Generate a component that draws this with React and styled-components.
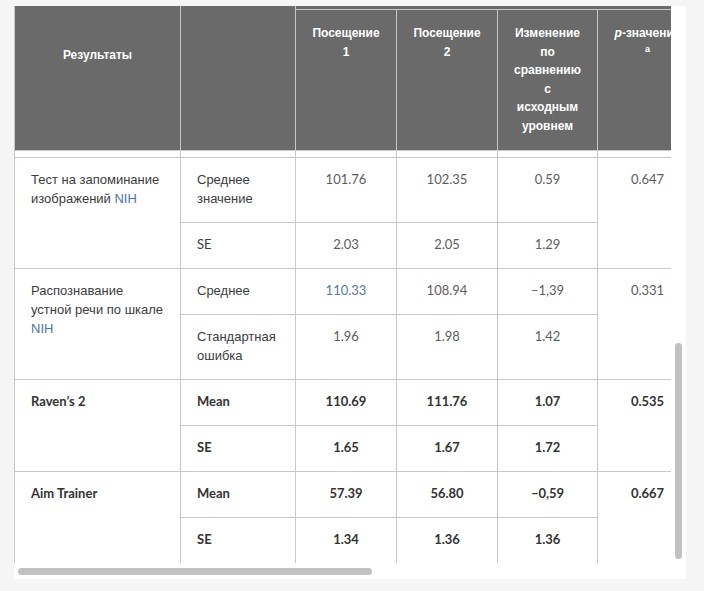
import React from "react";
import styled, { createGlobalStyle } from "styled-components";

const GlobalStyle = createGlobalStyle`
  html, body {
    margin: 0;
    padding: 0;
    background: #f5f5f5;
  }
  body {
    font-family: "Liberation Sans", Arial, sans-serif;
  }
`;

// white scroll frame: viewport + scroll bars drawn beside it
const Frame = styled.div`
  display: grid;
  grid-template-columns: 657px 15px;
  grid-template-rows: 557px 16px;
  width: 672px;
  margin: 6px 18px 12px 14px;
  background: #fff;
`;

const Viewport = styled.div`
  overflow: hidden;
`;

const Track = styled.div`
  display: flex;
  flex-direction: ${(p) => (p.$vertical ? "column" : "row")};
  justify-content: ${(p) => (p.$vertical ? "flex-end" : "flex-start")};
  padding: ${(p) => (p.$vertical ? "4px" : "5px 4px 4px")};
  box-sizing: border-box;
`;

const Thumb = styled.div`
  flex: none;
  width: ${(p) => (p.$vertical ? "7px" : `${p.$size}px`)};
  height: ${(p) => (p.$vertical ? `${p.$size}px` : "7px")};
  border-radius: 4px;
  background: #c1c1c1;
`;

const Table = styled.table`
  border-collapse: separate;
  border-spacing: 0;
  table-layout: fixed;
  width: 684px;
  border-left: 1px solid #c8c8c8;
`;

const HeadCell = styled.th`
  box-sizing: border-box;
  background: #6a6a6a;
  color: #fff;
  font: bold 12px/18.6px "Liberation Sans", Arial, sans-serif;
  text-align: center;
  vertical-align: top;
  padding: ${(p) => (p.$strip ? "0" : p.$lead ? "40px 15px 14px" : "14px 15px")};
  height: ${(p) => (p.$strip ? "4px" : "auto")};
  border-right: 1px solid #c8c8c8;
  border-bottom: 1px solid #c8c8c8;
`;

const Italic = styled.i`
  font-style: italic;
`;

const Sup = styled.sup`
  font-size: 9px;
  line-height: 1;
  vertical-align: 4px;
`;

const Cell = styled.td`
  box-sizing: border-box;
  padding: ${(p) => (p.$gap ? "0" : "12px 16px 14px")};
  height: ${(p) => (p.$gap ? "7px" : "auto")};
  vertical-align: top;
  text-align: ${(p) => (p.$center ? "center" : "left")};
  font-family: ${(p) =>
    p.$latin ? 'Lato, "Liberation Sans", sans-serif' : '"Liberation Sans", Arial, sans-serif'};
  font-size: 13px;
  line-height: 19px;
  font-weight: ${(p) => (p.$bold ? 700 : 400)};
  color: ${(p) => p.$tone || (p.$bold ? "#333" : p.$center ? "#5c5c5c" : "#3c3c3c")};
  border-right: 1px solid #c8c8c8;
  border-bottom: 1px solid #c8c8c8;
`;

const Abbr = styled.span`
  color: #4f73a6;
`;

const hasCyr = (s) => /[А-Яа-яЁё]/.test(s);

const groups = [
  {
    name: "Тест на запоминание изображений",
    nih: true,
    p: "0.647",
    rows: [
      ["Среднее значение", "101.76", "102.35", "0.59"],
      ["SE", "2.03", "2.05", "1.29"],
    ],
  },
  {
    name: "Распознавание устной речи по шкале",
    nih: true,
    p: "0.331",
    tones: { 1: "#5876a3" },
    rows: [
      ["Среднее", "110.33", "108.94", "–1,39"],
      ["Стандартная ошибка", "1.96", "1.98", "1.42"],
    ],
  },
  {
    name: "Raven’s 2",
    bold: true,
    p: "0.535",
    rows: [
      ["Mean", "110.69", "111.76", "1.07"],
      ["SE", "1.65", "1.67", "1.72"],
    ],
  },
  {
    name: "Aim Trainer",
    bold: true,
    p: "0.667",
    rows: [
      ["Mean", "57.39", "56.80", "–0,59"],
      ["SE", "1.34", "1.36", "1.36"],
    ],
  },
];

const widths = [166, 115, 101, 101, 100, 100];

function StatRow({ group, row, first }) {
  const bold = group.bold;
  const tone = (i) => (first && group.tones && group.tones[i]) || undefined;
  return (
    <tr>
      {first && (
        <Cell rowSpan={2} $bold={bold} $latin={!hasCyr(group.name)}>
          {group.name}
          {group.nih && (
            <>
              {" "}
              <Abbr>NIH</Abbr>
            </>
          )}
        </Cell>
      )}
      <Cell $bold={bold} $latin={!hasCyr(row[0])}>
        {row[0]}
      </Cell>
      {row.slice(1).map((v, i) => (
        <Cell key={i} $center $latin $bold={bold} $tone={tone(i + 1)}>
          {v}
        </Cell>
      ))}
      {first && (
        <Cell rowSpan={2} $center $latin $bold={bold}>
          {group.p}
        </Cell>
      )}
    </tr>
  );
}

export default function App() {
  return (
    <>
      <GlobalStyle />
      <Frame>
        <Viewport>
          <Table>
            <colgroup>
              {widths.map((w, i) => (
                <col key={i} style={{ width: w }} />
              ))}
            </colgroup>
            <thead>
              <tr>
                <HeadCell rowSpan={2} $lead>
                  Результаты
                </HeadCell>
                <HeadCell rowSpan={2} />
                <HeadCell colSpan={4} $strip />
              </tr>
              <tr>
                <HeadCell>Посещение 1</HeadCell>
                <HeadCell>Посещение 2</HeadCell>
                <HeadCell>Изменение по сравнению с исходным уровнем</HeadCell>
                <HeadCell>
                  <Italic>p</Italic>-значение <Sup>a</Sup>
                </HeadCell>
              </tr>
            </thead>
            <tbody>
              <tr>
                {widths.map((w, i) => (
                  <Cell key={i} $gap />
                ))}
              </tr>
              {groups.map((g, gi) =>
                g.rows.map((r, ri) => (
                  <StatRow key={`${gi}-${ri}`} group={g} row={r} first={ri === 0} />
                ))
              )}
            </tbody>
          </Table>
        </Viewport>
        <Track $vertical>
          <Thumb $vertical $size={216} />
        </Track>
        <Track>
          <Thumb $size={354} />
        </Track>
        <div />
      </Frame>
    </>
  );
}
